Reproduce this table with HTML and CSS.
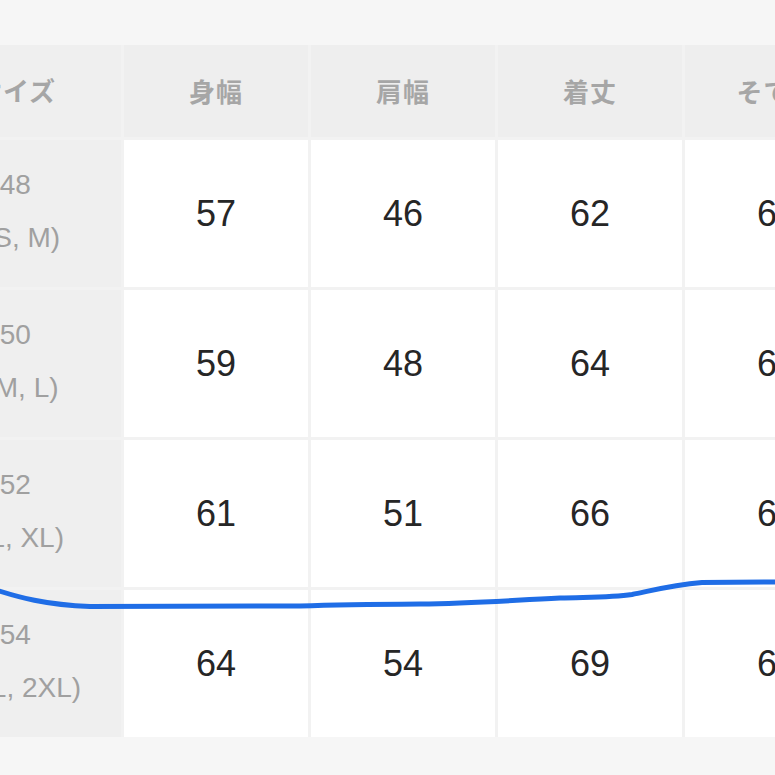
FILE: index.html
```html
<!DOCTYPE html>
<html lang="ja">
<head>
<meta charset="utf-8">
<title>サイズ表</title>
<link rel="stylesheet" href="styles.css">
</head>
<body>
<div class="page">
  <div class="chart">
    <div class="cell head label-col"><div class="label-inner head-inner">サイズ</div></div>
    <div class="cell head">身幅</div>
    <div class="cell head">肩幅</div>
    <div class="cell head">着丈</div>
    <div class="cell head">そで丈</div>

    <div class="cell label-col"><div class="label-inner"><span class="l1">46-48</span><span class="l2">(S, M)</span></div></div>
    <div class="cell num">57</div>
    <div class="cell num">46</div>
    <div class="cell num">62</div>
    <div class="cell num">61</div>

    <div class="cell label-col"><div class="label-inner"><span class="l1">48-50</span><span class="l2">(M, L)</span></div></div>
    <div class="cell num">59</div>
    <div class="cell num">48</div>
    <div class="cell num">64</div>
    <div class="cell num">62</div>

    <div class="cell label-col"><div class="label-inner"><span class="l1">50-52</span><span class="l2">(L, XL)</span></div></div>
    <div class="cell num">61</div>
    <div class="cell num">51</div>
    <div class="cell num">66</div>
    <div class="cell num">63</div>

    <div class="cell label-col"><div class="label-inner"><span class="l1">52-54</span><span class="l2">(XL, 2XL)</span></div></div>
    <div class="cell num">64</div>
    <div class="cell num">54</div>
    <div class="cell num">69</div>
    <div class="cell num">64</div>
  </div>
  <svg class="scribble" width="775" height="775" viewBox="0 0 775 775" aria-hidden="true">
    <path d="M -4 590 C 18 597, 45 605, 90 606.5 L 300 606 C 330 605, 350 604.5, 420 604 C 470 603.5, 500 601, 560 598 C 590 597, 612 597.5, 632 594.5 C 652 590.5, 672 585, 702 582.5 L 780 582" fill="none" stroke="#1f6de6" stroke-width="5" stroke-linecap="round" stroke-linejoin="round"/>
  </svg>
</div>
</body>
</html>
```

FILE: styles.css
```css
html, body {
  margin: 0;
  padding: 0;
  overflow: hidden;
  background: #f7f7f7;
}

.page {
  position: relative;
  width: 775px;
  height: 775px;
  overflow: hidden;
  background: #f6f6f6;
}

.chart {
  margin-top: 45px;
  display: grid;
  grid-template-columns: 121px repeat(4, 184px);
  grid-template-rows: 92px repeat(4, 147px);
  gap: 3px;
  width: max-content;
  background: #f2f2f2;
}

.cell {
  display: flex;
  align-items: center;
  justify-content: center;
  background: #ffffff;
  overflow: hidden;
}

.head {
  background: #eeeeee;
  color: #a6a6a6;
  font-family: "Noto Sans CJK JP", "Noto Sans", sans-serif;
  font-weight: 700;
  font-size: 26px;
  letter-spacing: 1px;
  padding-bottom: 2px;
}

.label-col {
  background: #efefef;
  justify-content: flex-start;
}

.label-inner {
  flex: none;
  width: 200px;
  margin-left: -78px;
  display: flex;
  flex-direction: column;
  align-items: center;
  font-family: "Liberation Sans", Arial, sans-serif;
  font-size: 28px;
  color: #a0a0a0;
  line-height: 53px;
  margin-top: -6px;
}

.head-inner {
  margin-left: -84px;
  margin-top: 0;
  font-family: "Noto Sans CJK JP", "Noto Sans", sans-serif;
  font-size: 26px;
  color: #a6a6a6;
  line-height: 1.4;
}

.l1 {
  padding-right: 54px;
}

.num {
  font-family: "Liberation Sans", Arial, sans-serif;
  font-size: 36px;
  color: #262626;
  padding-top: 1px;
}

.scribble {
  position: absolute;
  left: 0;
  top: 0;
  pointer-events: none;
}
```
